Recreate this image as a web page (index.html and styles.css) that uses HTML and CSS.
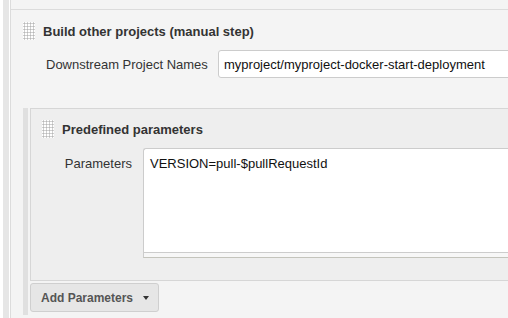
FILE: index.html
```html
<!DOCTYPE html>
<html lang="en">

<head>
    <meta charset="UTF-8">
    <title>Build other projects</title>
    <link rel="stylesheet" href="styles.css">
</head>

<body>
    <div class="outer">
        <div class="outer-panel">
            <div class="chunk">
                <div class="chunk-head">
                    <span class="grip"></span>
                    <b class="chunk-title">Build other projects (manual step)</b>
                </div>
                <div class="field-row">
                    <label class="field-label">Downstream Project Names</label>
                    <input type="text" class="field-input" value="myproject/myproject-docker-start-deployment">
                </div>

                <div class="inner">
                    <div class="inner-panel">
                        <div class="chunk-head inner-head">
                            <span class="grip"></span>
                            <b class="chunk-title">Predefined parameters</b>
                        </div>
                        <div class="param-row">
                            <label class="param-label">Parameters</label>
                            <div class="param-box">
                                <textarea class="param-text">VERSION=pull-$pullRequestId</textarea>
                                <div class="textarea-handle"></div>
                            </div>
                        </div>
                    </div>
                    <button class="add-button">Add Parameters <span class="caret"></span></button>
                </div>
            </div>
        </div>
    </div>
</body>

</html>
```

FILE: styles.css
```css
* {
    box-sizing: border-box;
}

body {
    margin: 0;
    height: 318px;
    overflow: hidden;
    background-color: #fff;
    font-family: "Liberation Sans", Arial, sans-serif;
    font-size: 13px;
    color: #333;
}

.outer {
    margin-left: 3px;
    padding-left: 1px;
    border-left: 6px solid #e6e6e6;
    height: 318px;
}

.outer-panel {
    height: 100%;
    overflow: hidden;
    padding-top: 9px;
    background-color: #f4f4f4;
    border-left: 1px solid #dcdcdc;
}

.chunk {
    border-top: 1px solid #dcdcdc;
    padding-top: 12px;
}

.chunk-head {
    display: flex;
    align-items: center;
    padding-left: 12px;
    line-height: 15px;
}

.grip {
    flex-shrink: 0;
    width: 12px;
    height: 18px;
    margin-right: 8px;
    background-color: #fff;
    background-image: radial-gradient(circle, #b8b8b8 0.9px, transparent 1.2px);
    background-size: 3px 3px;
}

.chunk-title {
    font-size: 13px;
    color: #333;
}

.field-row {
    display: flex;
    align-items: center;
    margin-top: 10px;
    padding-left: 35px;
}

.field-label {
    flex-shrink: 0;
    width: 172px;
    color: #333;
}

.field-input {
    flex-shrink: 0;
    width: 330px;
    height: 28px;
    padding: 0 5px;
    border: 1px solid #cccccc;
    border-radius: 3px 0 0 3px;
    font-family: inherit;
    font-size: 13px;
    color: #111;
    background-color: #fff;
    outline: none;
}

.inner {
    margin-top: 30px;
    margin-left: 12px;
    padding-left: 2px;
    padding-bottom: 3px;
    border-left: 5px solid #e0e0e0;
}

.inner-panel {
    background-color: #eeeeee;
    border-top: 1px solid #d6d6d6;
    border-left: 1px solid #d6d6d6;
    border-bottom: 1px solid #d6d6d6;
    padding-top: 11px;
    padding-bottom: 22px;
}

.inner-head {
    padding-left: 11px;
}

.param-row {
    display: flex;
    margin-top: 10px;
}

.param-label {
    flex-shrink: 0;
    width: 101px;
    margin-right: 11px;
    padding-top: 8px;
    text-align: right;
    line-height: 15px;
    color: #333;
}

.param-box {
    flex-shrink: 0;
    width: 380px;
}

.param-text {
    display: block;
    width: 100%;
    height: 105px;
    padding: 7px 6px;
    border: 1px solid #cccccc;
    border-right: none;
    border-radius: 3px 0 0 0;
    font-family: inherit;
    font-size: 13px;
    line-height: 15px;
    color: #111;
    background-color: #fff;
    resize: none;
    outline: none;
}

.textarea-handle {
    height: 5px;
    border-left: 1px solid #cccccc;
    border-bottom: 1px solid #c4c4bc;
    background-color: #f7f7f7;
}

.add-button {
    display: flex;
    align-items: center;
    margin-top: 2px;
    width: 129px;
    height: 29px;
    padding: 0 0 0 10px;
    border: 1px solid #cfcfcf;
    border-radius: 3px;
    background-color: #e6e6e6;
    font-family: inherit;
    font-size: 12px;
    font-weight: bold;
    color: #555;
    cursor: pointer;
}

.caret {
    margin-left: 10px;
    border-top: 4px solid #333;
    border-left: 3.5px solid transparent;
    border-right: 3.5px solid transparent;
}
```
